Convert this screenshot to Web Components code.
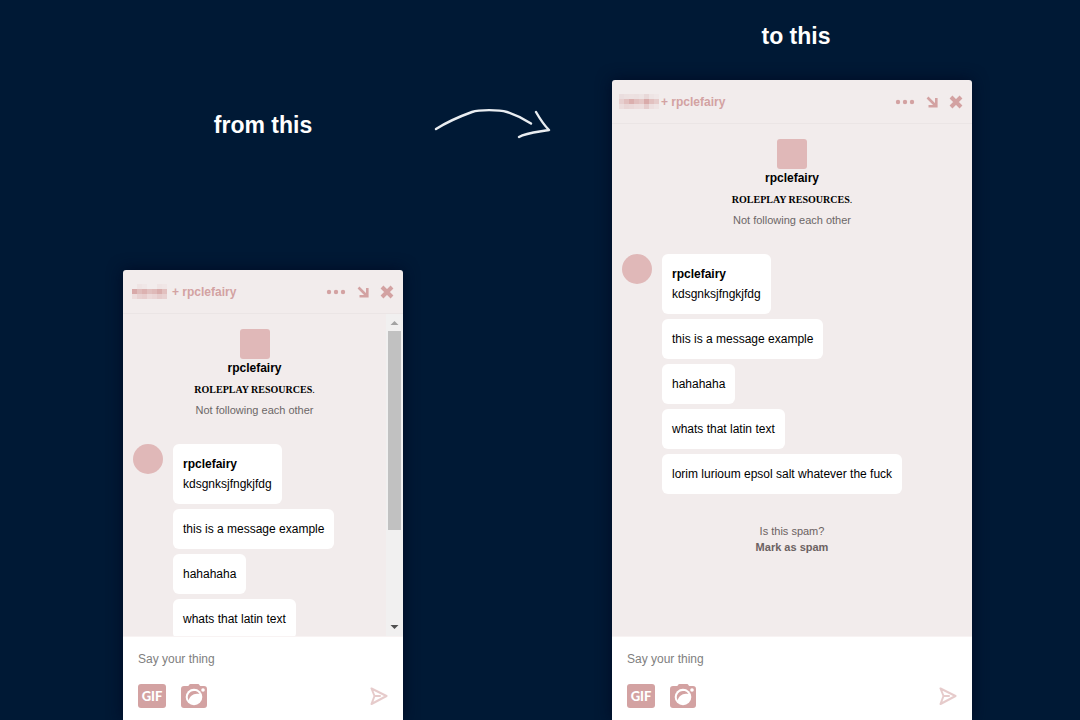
<!DOCTYPE html>
<html lang="en">
<head>
<meta charset="UTF-8">
<meta name="viewport" content="width=device-width, initial-scale=1.0">
<title>Messaging window size</title>
<style>
    body {
        margin: 0;
        background: #001935;
        font-family: "Liberation Sans", Arial, sans-serif;
        font-size: 12px;
        line-height: 20px;
        color: #000;
        --panel: #f2ecec;
        --pink: #d3a2a2;
        --avatar: #e0b8b8;
    }
</style>
</head>
<body>
<compare-board>
    <chat-column slot="before" label="from this">
        <chat-window contact="rpclefairy" scroll>
            <blurred-name slot="me" variant="small"></blurred-name>
            <chat-profile name="rpclefairy" status="Not following each other">ROLEPLAY RESOURCES</chat-profile>
            <message-group>
                <chat-bubble from="rpclefairy">kdsgnksjfngkjfdg</chat-bubble>
                <chat-bubble>this is a message example</chat-bubble>
                <chat-bubble>hahahaha</chat-bubble>
                <chat-bubble>whats that latin text</chat-bubble>
            </message-group>
        </chat-window>
    </chat-column>
    <drawn-arrow slot="arrow"></drawn-arrow>
    <chat-column slot="after" label="to this" tall>
        <chat-window contact="rpclefairy">
            <blurred-name slot="me"></blurred-name>
            <chat-profile name="rpclefairy" status="Not following each other">ROLEPLAY RESOURCES</chat-profile>
            <message-group>
                <chat-bubble from="rpclefairy">kdsgnksjfngkjfdg</chat-bubble>
                <chat-bubble>this is a message example</chat-bubble>
                <chat-bubble>hahahaha</chat-bubble>
                <chat-bubble>whats that latin text</chat-bubble>
                <chat-bubble>lorim lurioum epsol salt whatever the fuck</chat-bubble>
            </message-group>
            <spam-notice></spam-notice>
        </chat-window>
    </chat-column>
</compare-board>

<script>
// base element: opens the shadow root and paints the markup
class BaseElement extends HTMLElement {
    constructor() {
        super();
        this.attachShadow({ mode: 'open' });
    }
    connectedCallback() {
        this.shadowRoot.innerHTML = this.render();
    }
}

class CompareBoard extends BaseElement {
    render() {
        return `
    <style>
    :host {
        display: grid;
        grid-template-columns: 280px 1fr 360px;
        height: 100vh;
        box-sizing: border-box;
        padding: 0 10% 0 123px;
        overflow: hidden;
    }
    </style>
    <slot name="before"></slot>
    <slot name="arrow"></slot>
    <slot name="after"></slot>
`
    }
}

class ChatColumn extends BaseElement {
    render() {
        return `
    <style>
    :host {
        display: flex;
        flex-direction: column;
        min-height: 0;
    }
    h2 {
        margin: 0;
        padding: 110px 0 130px;
        font-size: 23px;
        line-height: 30px;
        text-align: center;
        color: #fff;
    }
    :host([tall]) h2 {
        padding: 21px 0 29px 8px;
    }
    </style>
    <h2>${this.getAttribute('label')}</h2>
    <slot></slot>
`
    }
}

class DrawnArrow extends BaseElement {
    render() {
        return `
    <style>
    :host {
        display: block;
        padding: 100px 60px 0 30px;
    }
    svg {
        display: block;
        width: 100%;
        overflow: visible;
    }
    </style>
    <svg viewBox="0 0 119 44" fill="none" stroke="#e9edf1" stroke-width="2.400" stroke-linecap="round" stroke-linejoin="round" aria-hidden="true">
        <path d="M3 29C14 22 28 16 39 12C46 9.500 66 9.500 74 12C83 15 91 19 98 23.500M103 12C107 19 111 25 116 30C105 32 93 33 86 37"/>
    </svg>
`
    }
}

// name covered by a pixel mosaic
class BlurredName extends BaseElement {
    render() {
        const small = this.getAttribute('variant') === 'small';
        const rows = small ? [
            ['', '#efe4e4', '#f0e7e7', '', '', '#efe4e4', '#f0e6e6'],
            ['#d8a9a9', '#dfbcbb', '#dcb2b1', '#e1c0bf', '#dfbab9', '#d9adac', '#e2c0bf'],
            ['#eddcdc', '#e8d1d1', '#e7cdcd', '#ecd9d9', '#ead5d5', '#e6cccc', '#e8d1d1']
        ] : [
            ['#eaddde', '#ece0e0', '#ede1e1', '#ece0e0', '#ede3e3', '#e8d8d8', '#eee4e4', '#f0e7e7'],
            ['#e7cfcf', '#e2c0bf', '#dbafae', '#e1bfbe', '#e4c6c5', '#d9abaa', '#e2c1c0', '#e6cccb'],
            ['#ecdddd', '#e9d6d6', '#ead8d8', '#ecdcdc', '#ecdddd', '#e5cccc', '#eddfdf', '#efe4e4']
        ];
        const width = rows[0].length * 5;
        const cells = rows.map((row, y) => row.map((color, x) =>
            color ? `<rect x="${x * 5}" y="${y * 5}" width="5" height="5" fill="${color}"/>` : ''
        ).join('')).join('');
        return `
    <style>
    :host {
        display: block;
        padding: 0 2px 0 7px;
    }
    :host([variant="small"]) {
        padding: 0 5px 0 9px;
    }
    svg { display: block; }
    </style>
    <svg width="${width}" height="15" shape-rendering="crispEdges" aria-hidden="true">${cells}</svg>
`
    }
}

class ChatWindow extends BaseElement {
    render() {
        const scrollbar = this.hasAttribute('scroll') ? `
        <div class="scrollbar" aria-hidden="true">
            <svg width="17" height="17"><path d="M4.500 11L8.500 7L12.500 11Z" fill="#a3a3a3"/></svg>
            <div class="track"><div class="thumb"></div></div>
            <svg width="17" height="17"><path d="M4.500 6L8.500 10L12.500 6Z" fill="#505050"/></svg>
        </div>` : '';
        return `
    <style>
    :host {
        display: flex;
        flex-direction: column;
        flex: 1;
        min-height: 0;
        background: var(--panel);
        border-radius: 3px 3px 0 0;
        box-shadow: 0 0 15px #000b24;
    }
    button {
        display: block;
        padding: 0;
        border: 0;
        background: none;
        color: var(--pink);
        cursor: pointer;
    }
    svg { display: block; }
    header {
        display: flex;
        align-items: center;
        height: 43px;
        border-bottom: 1px solid #ebe5e5;
        color: var(--pink);
        font-weight: bold;
    }
    .actions {
        display: flex;
        align-items: center;
        gap: 11px;
        margin-left: auto;
        padding-right: 9px;
    }
    .body {
        display: flex;
        flex: 1;
        min-height: 0;
    }
    .messages {
        flex: 1;
        min-width: 0;
        padding-top: 15px;
        overflow: hidden;
    }
    .scrollbar {
        display: flex;
        flex-direction: column;
        width: 17px;
        background: #f1f0f0;
    }
    .track {
        flex: 1;
        padding: 0 2px;
    }
    .thumb {
        height: 69%;
        background: #c1c1c1;
    }
    footer {
        padding: 14px 15px 12px;
        border-top: 1px solid #f8f3f3;
        background: #fff;
    }
    input {
        display: block;
        width: 100%;
        height: 16px;
        padding: 0;
        border: 0;
        outline: 0;
        background: none;
        font: inherit;
        line-height: 16px;
    }
    input::placeholder {
        color: #808080;
        opacity: 1;
    }
    .tools {
        display: flex;
        align-items: center;
        gap: 15px;
        margin-top: 17px;
    }
    .gif {
        width: 28px;
        height: 24px;
        border-radius: 3px;
        background: var(--pink);
        color: #fff;
        font: 900 13px/24px Lato, "Liberation Sans", sans-serif;
    }
    .send {
        margin-left: auto;
        opacity: 0.55;
    }
    </style>
    <header>
        <slot name="me"></slot>
        <span>+ ${this.getAttribute('contact')}</span>
        <div class="actions">
            <button type="button" aria-label="More options">
                <svg width="20" height="14" fill="currentColor"><circle cx="3" cy="7" r="2.200"/><circle cx="10" cy="7" r="2.200"/><circle cx="17" cy="7" r="2.200"/></svg>
            </button>
            <button type="button" aria-label="Minimize">
                <svg width="12" height="14" fill="none" stroke="currentColor" stroke-width="2.600"><path d="M1.500 2.500L9.500 10.500M10.300 3V11.300H2.500"/></svg>
            </button>
            <button type="button" aria-label="Close">
                <svg width="14" height="14" fill="none" stroke="currentColor" stroke-width="4"><path d="M2 2L12 12M12 2L2 12"/></svg>
            </button>
        </div>
    </header>
    <div class="body">
        <div class="messages"><slot></slot></div>${scrollbar}
    </div>
    <footer>
        <input type="text" aria-label="Message" placeholder="Say your thing">
        <div class="tools">
            <button type="button" class="gif">GIF</button>
            <button type="button" aria-label="Add photo">
                <svg width="26" height="24">
                    <path d="M3 2H7C8 2 8 0 9.500 0H17C18.500 0 18.500 2 19.500 2H23Q26 2 26 5V21Q26 24 23 24H3Q0 24 0 21V5Q0 2 3 2Z" fill="currentColor"/>
                    <circle cx="13" cy="13" r="8.300" fill="#fff"/>
                    <path d="M7.600 16.500A6.300 6.300 0 1 1 18.500 10C13 8.500 8.500 12 7.600 16.500Z" fill="currentColor"/>
                    <circle cx="22" cy="6" r="1.800" fill="#fff"/>
                </svg>
            </button>
            <button type="button" class="send" aria-label="Send">
                <svg width="18" height="18" fill="none" stroke="currentColor" stroke-width="2" stroke-linejoin="round" stroke-linecap="round"><path d="M1.500 1.500L16.500 9L1.500 17L4.500 9L1.500 1.500M4.500 9H10"/></svg>
            </button>
        </div>
    </footer>
`
    }
}

class ChatProfile extends BaseElement {
    render() {
        return `
    <style>
    :host {
        display: flex;
        flex-direction: column;
        align-items: center;
        margin-bottom: 24px;
    }
    .avatar {
        width: 30px;
        height: 30px;
        border-radius: 3px;
        background: var(--avatar);
    }
    .name {
        line-height: 18px;
        font-weight: bold;
    }
    .about {
        margin-top: 3px;
        font: 10px/20px "Liberation Serif", "Times New Roman", serif;
    }
    .status {
        font-size: 11px;
        color: #6c6767;
    }
    </style>
    <div class="avatar"></div>
    <div class="name">${this.getAttribute('name')}</div>
    <div class="about"><b><slot></slot></b>.</div>
    <div class="status">${this.getAttribute('status')}</div>
`
    }
}

class MessageGroup extends BaseElement {
    render() {
        return `
    <style>
    :host {
        display: flex;
        gap: 10px;
        padding: 0 10px;
    }
    .avatar {
        flex: none;
        width: 30px;
        height: 30px;
        border-radius: 50%;
        background: var(--avatar);
    }
    .list {
        display: flex;
        flex-direction: column;
        align-items: flex-start;
        gap: 5px;
    }
    </style>
    <div class="avatar"></div>
    <div class="list"><slot></slot></div>
`
    }
}

class ChatBubble extends BaseElement {
    render() {
        const from = this.getAttribute('from');
        return `
    <style>
    :host {
        display: block;
        padding: 10px;
        border-radius: 6px;
        background: #fff;
    }
    b { display: block; }
    </style>
    ${from ? `<b>${from}</b>` : ''}
    <slot></slot>
`
    }
}

class SpamNotice extends BaseElement {
    render() {
        return `
    <style>
    :host {
        display: flex;
        flex-direction: column;
        align-items: center;
        margin-top: 29px;
        font-size: 11px;
        line-height: 16px;
        color: #6c6262;
    }
    button {
        padding: 0;
        border: 0;
        background: none;
        font: inherit;
        font-weight: bold;
        color: inherit;
        cursor: pointer;
    }
    </style>
    <span>Is this spam?</span>
    <button type="button">Mark as spam</button>
`
    }
}

customElements.define('compare-board', CompareBoard);
customElements.define('chat-column', ChatColumn);
customElements.define('drawn-arrow', DrawnArrow);
customElements.define('blurred-name', BlurredName);
customElements.define('chat-window', ChatWindow);
customElements.define('chat-profile', ChatProfile);
customElements.define('message-group', MessageGroup);
customElements.define('chat-bubble', ChatBubble);
customElements.define('spam-notice', SpamNotice);
</script>
</body>
</html>
